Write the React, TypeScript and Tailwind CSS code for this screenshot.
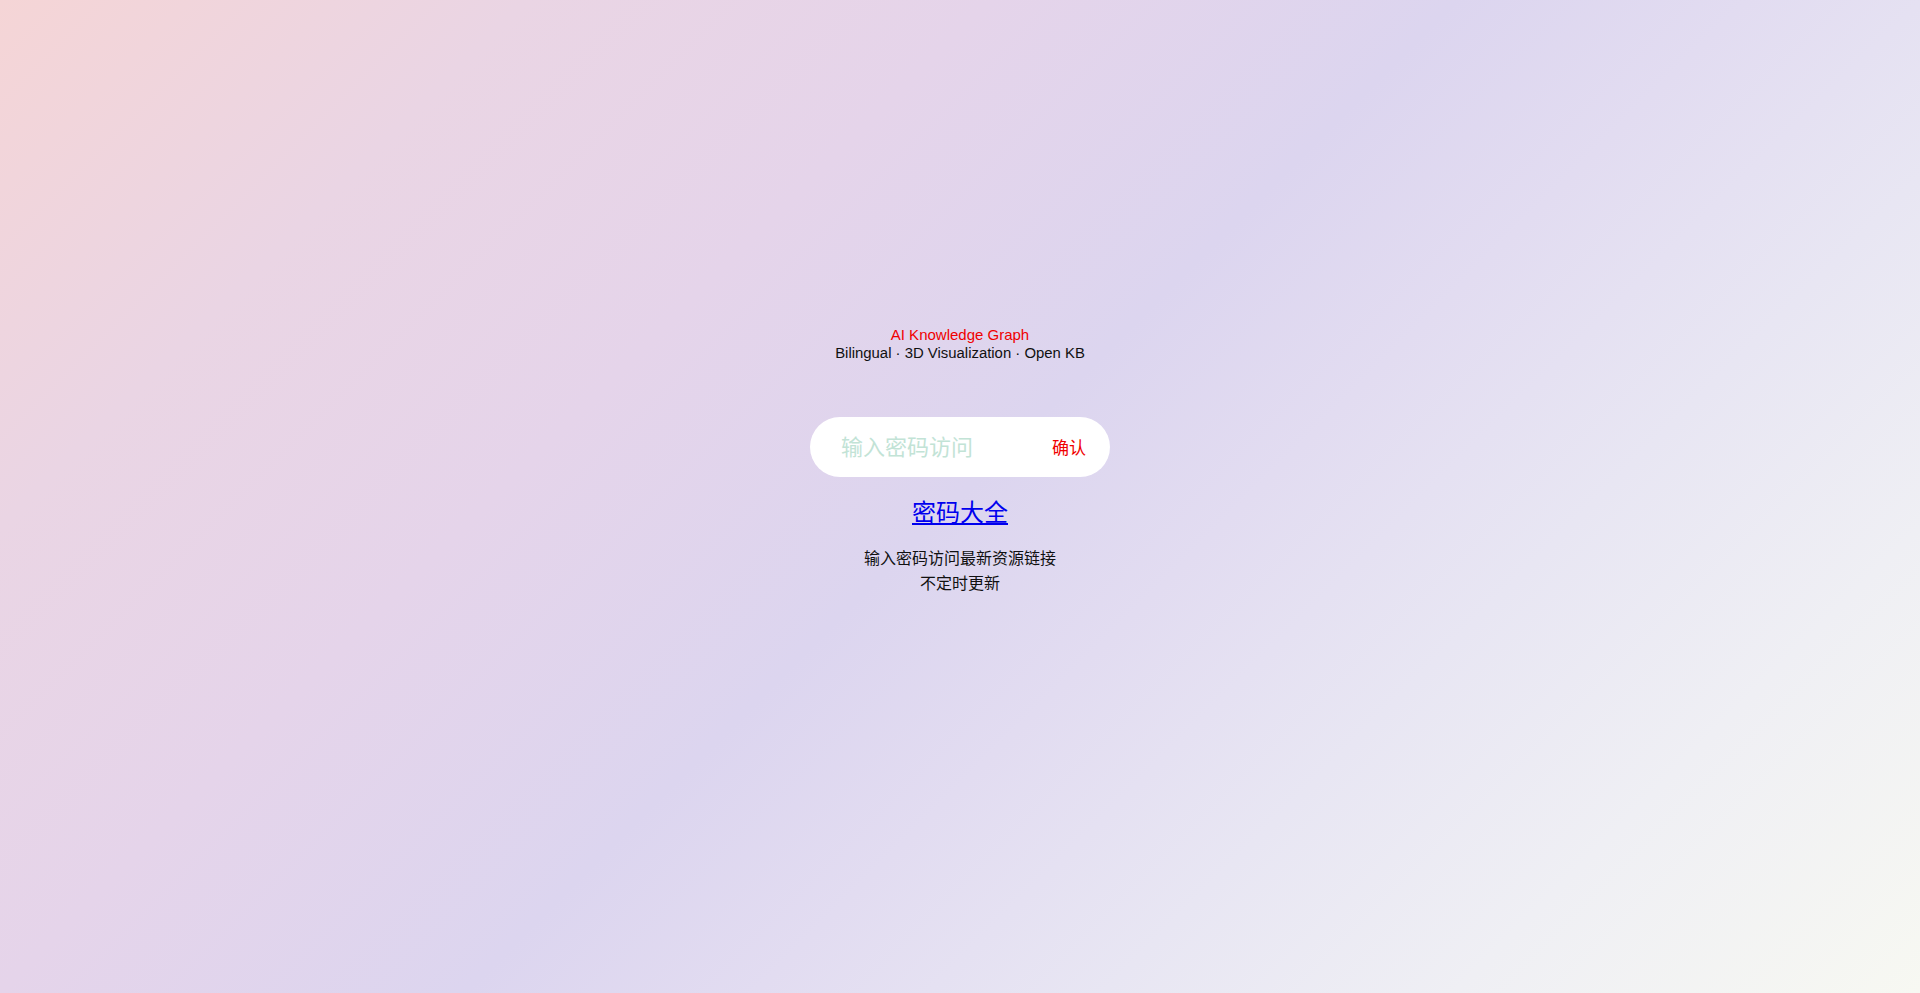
import React, { useState } from 'react';

export default function App() {
  const [password, setPassword] = useState('');

  return (
    <div
      className="flex h-screen w-full flex-col items-center overflow-hidden bg-[linear-gradient(135deg,#f5d5d6_0%,#ead5e4_18%,#e5d4ea_34%,#dcd5ef_50%,#e2dcf1_60%,#e8e6f3_72%,#efeff4_84%,#f7f8f2_100%)] pt-[326px] text-center"
      style={{ fontFamily: '"Liberation Sans", "Noto Sans CJK SC", Arial, sans-serif' }}
    >
      <div className="text-[15px] leading-[18px] text-[#f00000]">AI Knowledge Graph</div>
      <div className="text-[14.9px] leading-[18px] text-[#111]">Bilingual · 3D Visualization · Open KB</div>

      <div className="mt-[55px] flex h-[60px] w-[300px] items-center rounded-full bg-white pl-[31px] pr-[24px]">
        <input
          value={password}
          onChange={(e) => setPassword(e.target.value)}
          placeholder="输入密码访问"
          className="w-0 flex-1 bg-transparent text-[22px] text-[#333] outline-none placeholder:text-[#c2e3d6]"
        />
        <button className="pt-[4px] text-[17px] text-[#f00000]">确认</button>
      </div>

      <a href="#" className="mt-[18px] text-[24px] leading-[36px] text-[#0000ee] underline">
        密码大全
      </a>

      <div className="mt-[15px] text-[16px] leading-[25px] text-[#111]">
        <p>输入密码访问最新资源链接</p>
        <p>不定时更新</p>
      </div>
    </div>
  );
}
